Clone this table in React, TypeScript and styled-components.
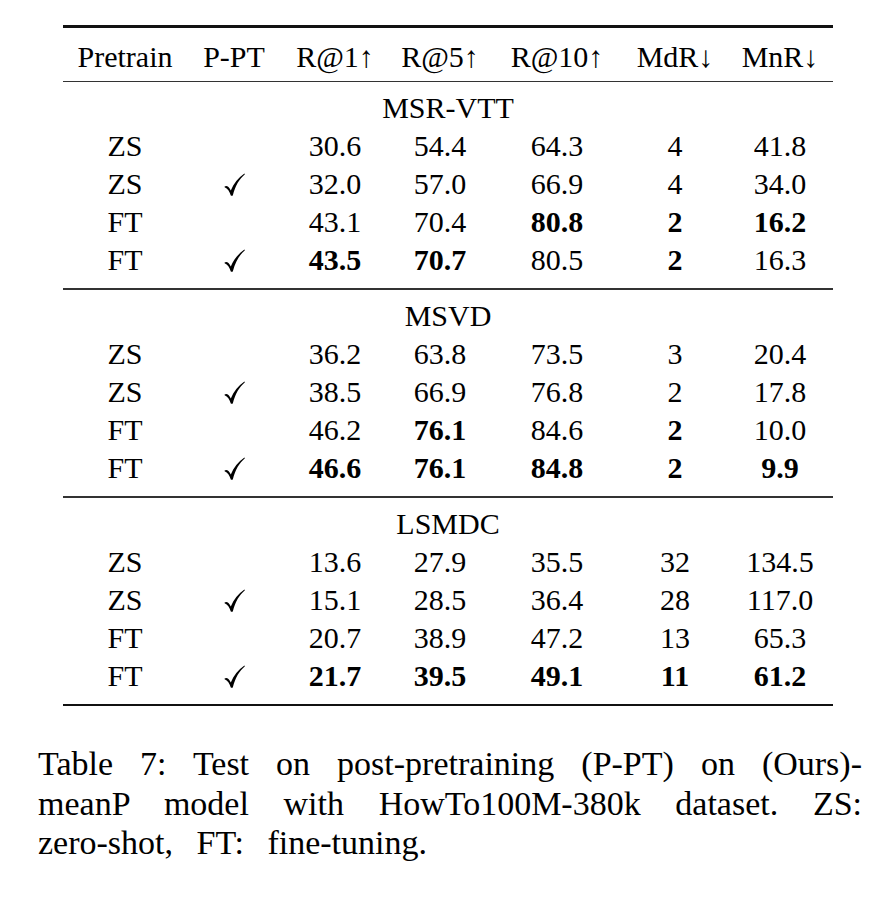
import React from "react";
import styled, { createGlobalStyle } from "styled-components";

type Row = [string, boolean, string, string, string, string, string];

// "*" in front of a value means it is printed in bold
const sections: { title: string; rows: Row[] }[] = [
  {
    title: "MSR-VTT",
    rows: [
      ["ZS", false, "30.6", "54.4", "64.3", "4", "41.8"],
      ["ZS", true, "32.0", "57.0", "66.9", "4", "34.0"],
      ["FT", false, "43.1", "70.4", "*80.8", "*2", "*16.2"],
      ["FT", true, "*43.5", "*70.7", "80.5", "*2", "16.3"],
    ],
  },
  {
    title: "MSVD",
    rows: [
      ["ZS", false, "36.2", "63.8", "73.5", "3", "20.4"],
      ["ZS", true, "38.5", "66.9", "76.8", "2", "17.8"],
      ["FT", false, "46.2", "*76.1", "84.6", "*2", "10.0"],
      ["FT", true, "*46.6", "*76.1", "*84.8", "*2", "*9.9"],
    ],
  },
  {
    title: "LSMDC",
    rows: [
      ["ZS", false, "13.6", "27.9", "35.5", "32", "134.5"],
      ["ZS", true, "15.1", "28.5", "36.4", "28", "117.0"],
      ["FT", false, "20.7", "38.9", "47.2", "13", "65.3"],
      ["FT", true, "*21.7", "*39.5", "*49.1", "*11", "*61.2"],
    ],
  },
];

const headers = ["Pretrain", "P-PT", "R@1↑", "R@5↑", "R@10↑", "MdR↓", "MnR↓"];

const captionLines = [
  "Table 7: Test on post-pretraining (P-PT) on (Ours)-",
  "meanP model with HowTo100M-380k dataset. ZS:",
];

const GlobalStyle = createGlobalStyle`
  html, body {
    margin: 0;
    padding: 0;
    background: #ffffff;
  }
  body {
    font-family: "Liberation Serif", "Times New Roman", serif;
    color: #000000;
  }
`;

const Page = styled.div`
  width: 892px;
  height: 902px;
  padding-top: 25px;
  box-sizing: border-box;
`;

const Table = styled.div`
  width: 770px;
  margin-left: 63px;
  font-size: 30px;
`;

const Rule = styled.div<{ $thick?: boolean; $above?: number; $below?: number }>`
  height: ${(p) => (p.$thick ? 2.5 : 1.8)}px;
  background: ${(p) => (p.$thick ? "#111" : "#333")};
  margin-top: ${(p) => p.$above ?? 0}px;
  margin-bottom: ${(p) => p.$below ?? 0}px;
`;

const GridRow = styled.div`
  display: grid;
  grid-template-columns: 124px 94px 108px 102px 132px 104px 106px;
  height: 38px;
  line-height: 38px;
`;

const Cell = styled.div<{ $bold?: boolean }>`
  text-align: center;
  white-space: nowrap;
  font-weight: ${(p) => (p.$bold ? 700 : 400)};
`;

const CheckSvg = styled.svg`
  width: 21px;
  height: 23px;
  vertical-align: -2px;
`;

const SectionTitle = styled.div`
  height: 38px;
  line-height: 38px;
  text-align: center;
`;

const Caption = styled.div`
  margin: 38px 0 0 38px;
  width: 824px;
  font-size: 34px;
  line-height: 39.5px;
`;

const CaptionLine = styled.div<{ $justify?: boolean }>`
  white-space: nowrap;
  text-align: ${(p) => (p.$justify ? "justify" : "left")};
  text-align-last: ${(p) => (p.$justify ? "justify" : "left")};
  word-spacing: ${(p) => (p.$justify ? "0" : "15px")};
`;

// \checkmark-like tick: thick short stroke, long thin upstroke
function Check() {
  return (
    <CheckSvg viewBox="0 0 21 23">
      <path
        d="M0.6 13.6 C2.6 12.2 4.8 13.6 6.8 17.4 C9.6 10.6 14.2 5 20.4 0.6 L20.9 1.3 C15.2 6.2 11.6 12.2 8.8 22.4 C8.2 22.9 7.2 22.9 6.8 22.4 C5.6 18.6 3.6 15.4 0.6 14.3 Z"
        fill="#000"
      />
    </CheckSvg>
  );
}

function Value({ v }: { v: string }) {
  const bold = v.startsWith("*");
  return <Cell $bold={bold}>{bold ? v.slice(1) : v}</Cell>;
}

export default function App() {
  return (
    <Page>
      <GlobalStyle />
      <Table>
        <Rule $thick />
        <GridRow style={{ marginTop: 10 }}>
          {headers.map((h) => (
            <Cell key={h}>{h}</Cell>
          ))}
        </GridRow>
        {sections.map((s, i) => (
          <React.Fragment key={s.title}>
            <Rule $above={i === 0 ? 5 : 9} $below={7} />
            <SectionTitle>{s.title}</SectionTitle>
            {s.rows.map((r, j) => (
              <GridRow key={j}>
                <Cell>{r[0]}</Cell>
                <Cell>{r[1] ? <Check /> : null}</Cell>
                {r.slice(2).map((v, k) => (
                  <Value key={k} v={v as string} />
                ))}
              </GridRow>
            ))}
          </React.Fragment>
        ))}
        <Rule $thick $above={9} />
      </Table>
      <Caption>
        {captionLines.map((line) => (
          <CaptionLine key={line} $justify>
            {line}
          </CaptionLine>
        ))}
        <CaptionLine>zero-shot, FT: fine-tuning.</CaptionLine>
      </Caption>
    </Page>
  );
}
